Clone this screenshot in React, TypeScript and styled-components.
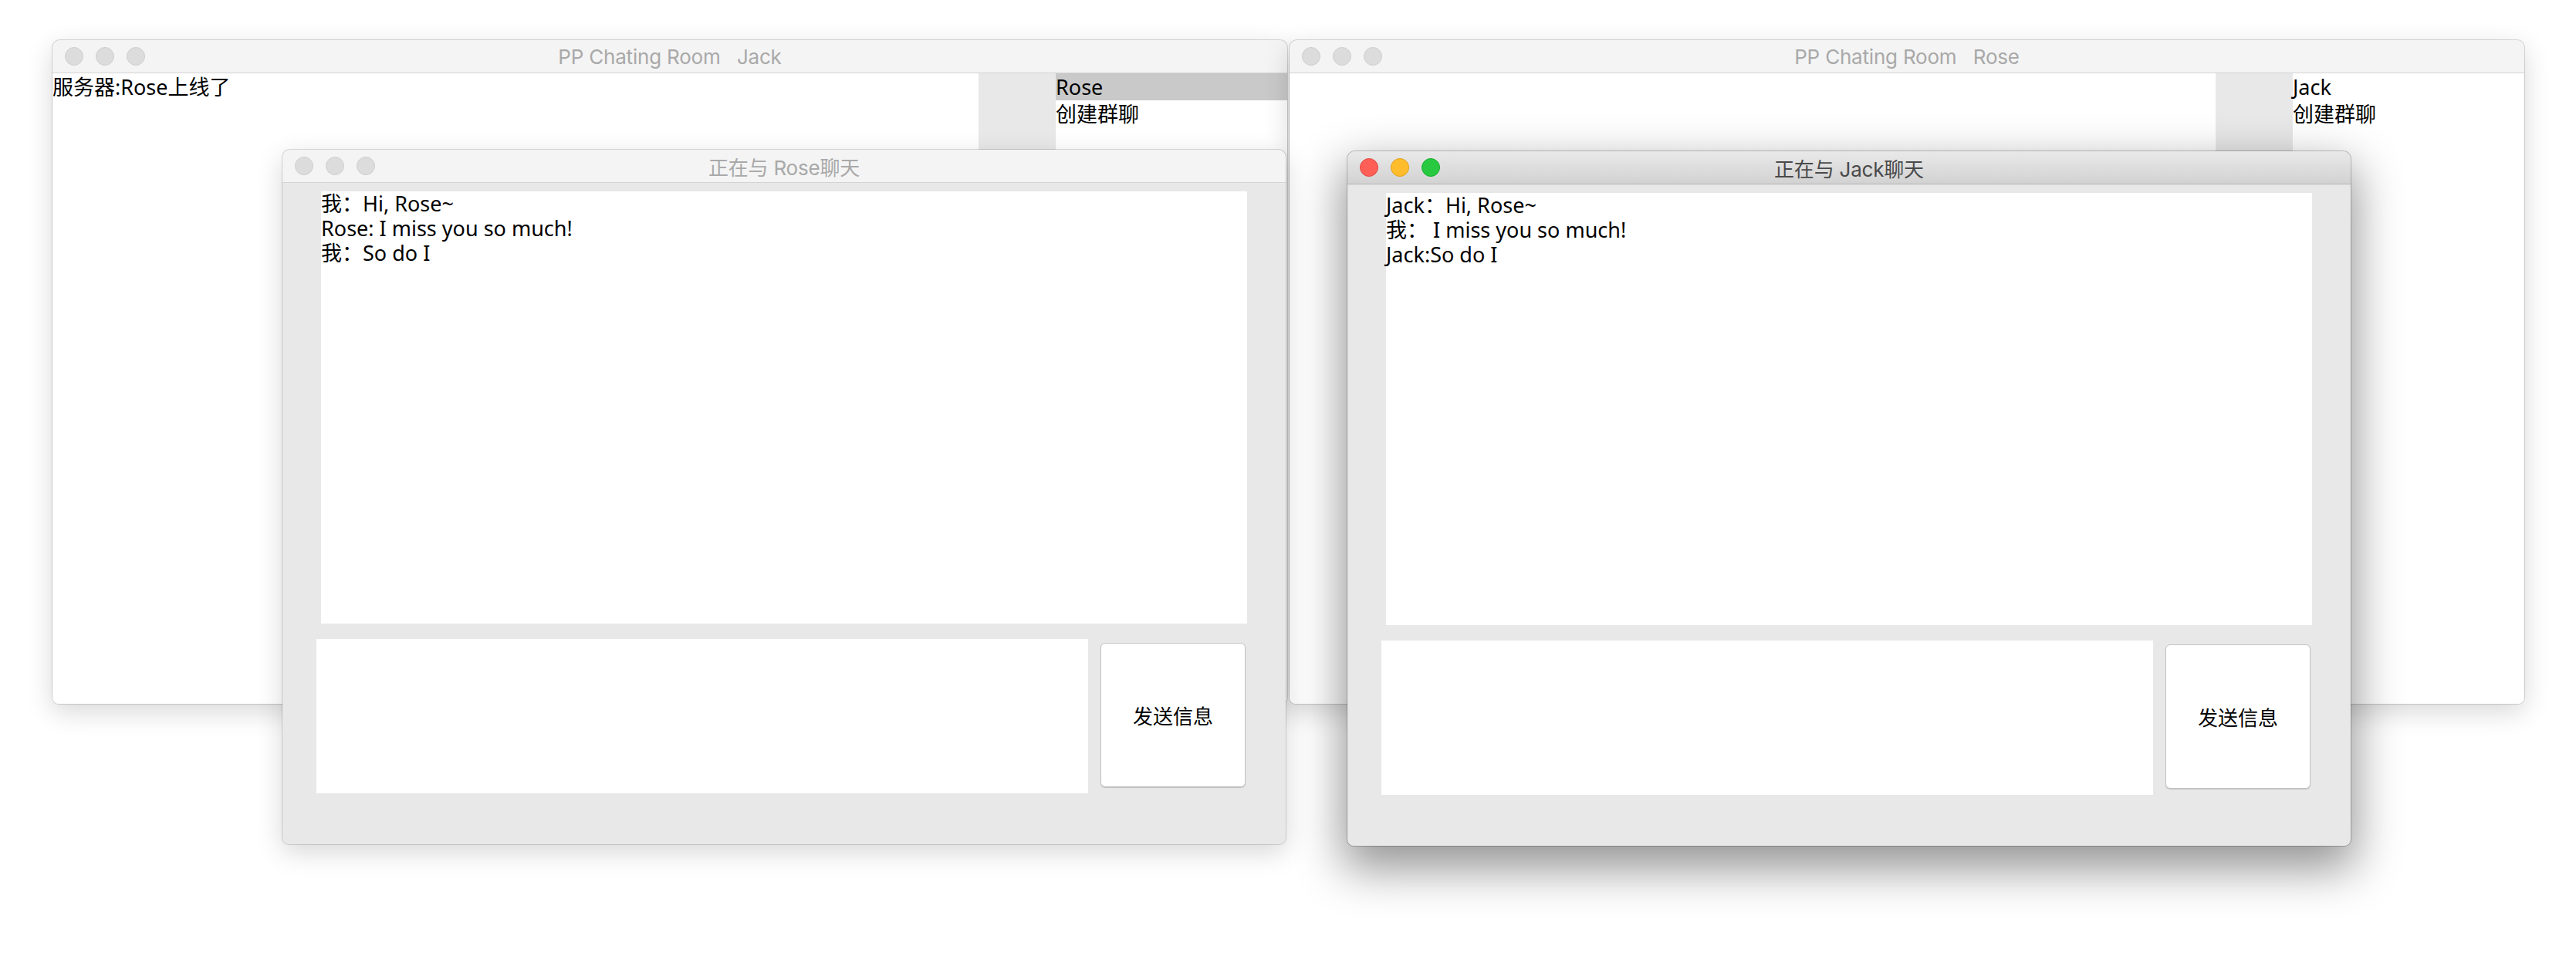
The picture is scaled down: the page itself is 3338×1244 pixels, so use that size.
import React from 'react';
import styled, {createGlobalStyle, css} from 'styled-components';

const GlobalStyle = createGlobalStyle`
  html, body {
    margin: 0;
    padding: 0;
    background: #ffffff;
  }
  * {
    box-sizing: border-box;
  }
`

const textFont = `"Noto Sans", "Noto Sans CJK SC", sans-serif`;
const titleFont = `Inter, "Noto Sans CJK SC", sans-serif`;

const Desktop = styled.div`
  position: relative;
  width: 3338px;
  height: 1244px;
  background: #ffffff;
  overflow: hidden;
`

const Frame = styled.div<{$left: number; $top: number; $width: number; $height: number; $active?: boolean}>`
  position: absolute;
  left: ${p => p.$left}px;
  top: ${p => p.$top}px;
  width: ${p => p.$width}px;
  height: ${p => p.$height}px;
  display: flex;
  flex-direction: column;
  border-radius: 10px 10px 8px 8px;
  overflow: hidden;
  background: #e8e8e8;
  box-shadow: ${p => p.$active
    ? '0 0 0 1px rgba(0,0,0,0.22), 0 24px 60px 6px rgba(0,0,0,0.42)'
    : '0 0 0 1px rgba(0,0,0,0.14), 0 10px 34px rgba(0,0,0,0.16)'};
`

const TitleBar = styled.div<{$active?: boolean}>`
  position: relative;
  flex: 0 0 43px;
  display: flex;
  align-items: center;
  justify-content: center;
  border-bottom: 1px solid ${p => p.$active ? '#b3b3b3' : '#d3d3d3'};
  background: ${p => p.$active
    ? 'linear-gradient(#e9e9e9, #d2d2d2)'
    : '#f4f4f4'};
`

const Lights = styled.div`
  position: absolute;
  left: 16px;
  top: 9px;
  display: flex;
  gap: 16px;
`

const Light = styled.span<{$fill: string; $edge: string}>`
  width: 24px;
  height: 24px;
  border-radius: 50%;
  background: ${p => p.$fill};
  border: 1px solid ${p => p.$edge};
`

const Title = styled.span<{$active?: boolean}>`
  font-family: ${titleFont};
  font-size: 26px;
  color: ${p => p.$active ? '#4a4a4a' : '#a9a9a9'};
  white-space: pre;
  letter-spacing: -0.2px;
`

const MainBody = styled.div`
  flex: 1;
  display: grid;
  grid-template-columns: 1200px 100px 1fr;
`

const LogPane = styled.div`
  background: #ffffff;
`

const Gutter = styled.div`
  background: #e8e8e8;
`

const FriendList = styled.div`
  background: #ffffff;
  display: flex;
  flex-direction: column;
`

const rowText = css`
  font-family: ${textFont};
  font-size: 27px;
  color: #000000;
`

const LogLine = styled.div`
  ${rowText};
  height: 35px;
  line-height: 35px;
`

const FriendRow = styled.div<{$selected?: boolean}>`
  ${rowText};
  height: 35px;
  line-height: 35px;
  background: ${p => p.$selected ? '#c9c9c9' : 'transparent'};
`

const ChatBody = styled.div`
  flex: 1;
  display: flex;
  flex-direction: column;
  padding: 11px 0 0 0;
`

const MessagePane = styled.div`
  margin: 0 50px;
  height: 560px;
  background: #ffffff;
`

const MessageLine = styled.div`
  ${rowText};
  height: 32px;
  line-height: 32px;
  white-space: pre;
`

const Composer = styled.div`
  display: flex;
  align-items: flex-start;
  gap: 16px;
  margin-top: 20px;
  padding-left: 44px;
`

const InputBox = styled.div`
  width: 1000px;
  height: 200px;
  background: #ffffff;
`

const SendButton = styled.button`
  margin-top: 5px;
  width: 188px;
  height: 187px;
  border: 1px solid #c3c3c3;
  border-radius: 6px;
  background: #ffffff;
  box-shadow: 0 1px 1px rgba(0,0,0,0.18);
  font-family: ${textFont};
  font-size: 26px;
  color: #000000;
  padding: 0;
`

const TrafficLights: React.FC<{active?: boolean}> = ({active}) => (
  <Lights>
    {active ? (
      <>
        <Light $fill="#ff5f57" $edge="#e2463f" />
        <Light $fill="#ffbd2e" $edge="#e1a116" />
        <Light $fill="#28c941" $edge="#14ae2a" />
      </>
    ) : (
      <>
        <Light $fill="#dcdcdc" $edge="#cecece" />
        <Light $fill="#dcdcdc" $edge="#cecece" />
        <Light $fill="#dcdcdc" $edge="#cecece" />
      </>
    )}
  </Lights>
);

interface MainProps {
  left: number;
  user: string;
  log: string[];
  friends: string[];
  selected?: number;
}

const MainWindow: React.FC<MainProps> = ({left, user, log, friends, selected}) => (
  <Frame $left={left} $top={52} $width={1600} $height={860}>
    <TitleBar>
      <TrafficLights />
      <Title>{`PP Chating Room   ${user}`}</Title>
    </TitleBar>
    <MainBody>
      <LogPane>
        {log.map((line, i) => <LogLine key={i}>{line}</LogLine>)}
      </LogPane>
      <Gutter />
      <FriendList>
        {friends.map((name, i) => (
          <FriendRow key={i} $selected={i === selected}>{name}</FriendRow>
        ))}
      </FriendList>
    </MainBody>
  </Frame>
);

interface ChatProps {
  left: number;
  top: number;
  peer: string;
  lines: string[];
  active?: boolean;
}

const ChatWindow: React.FC<ChatProps> = ({left, top, peer, lines, active}) => (
  <Frame $left={left} $top={top} $width={1300} $height={900} $active={active}>
    <TitleBar $active={active}>
      <TrafficLights active={active} />
      <Title $active={active}>{`正在与 ${peer}聊天`}</Title>
    </TitleBar>
    <ChatBody>
      <MessagePane>
        {lines.map((line, i) => <MessageLine key={i}>{line}</MessageLine>)}
      </MessagePane>
      <Composer>
        <InputBox />
        <SendButton>发送信息</SendButton>
      </Composer>
    </ChatBody>
  </Frame>
);

export default function App() {
  return (
    <>
      <GlobalStyle />
      <Desktop>
        <MainWindow
          left={68}
          user="Jack"
          log={['服务器:Rose上线了']}
          friends={['Rose', '创建群聊']}
          selected={0}
        />
        <MainWindow
          left={1671}
          user="Rose"
          log={[]}
          friends={['Jack', '创建群聊']}
        />
        <ChatWindow
          left={366}
          top={194}
          peer="Rose"
          lines={['我：Hi, Rose~', 'Rose: I miss you so much!', '我：So do I']}
        />
        <ChatWindow
          left={1746}
          top={196}
          peer="Jack"
          active
          lines={['Jack：Hi, Rose~', '我： I miss you so much!', 'Jack:So do I']}
        />
      </Desktop>
    </>
  );
}
